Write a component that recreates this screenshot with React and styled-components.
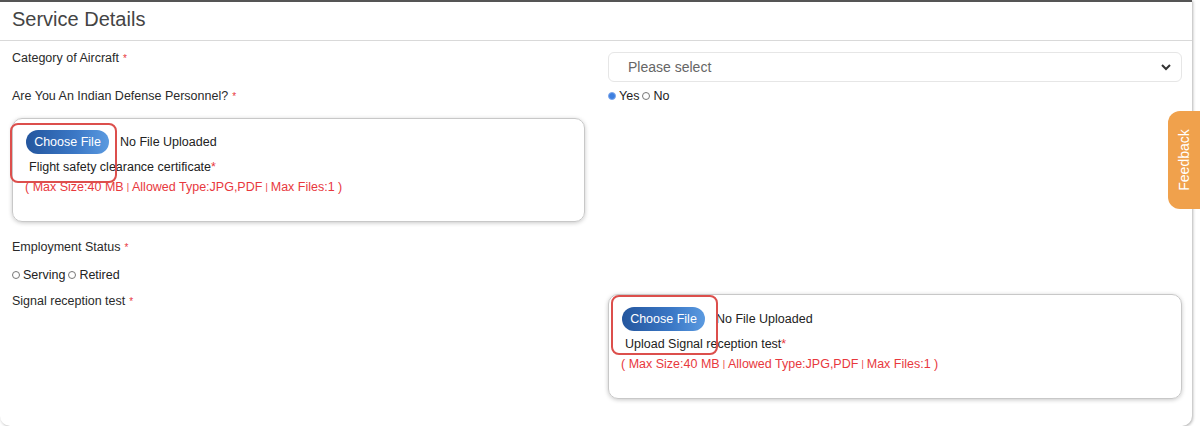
import styled, { createGlobalStyle } from "styled-components";

const red = "#e8383d";

const GlobalStyle = createGlobalStyle`
  body {
    margin: 0;
    background: #fff;
    font-family: "Liberation Sans", Arial, sans-serif;
    color: #333;
  }
`;

const Card = styled.div`
  width: 1192px;
  height: 426px;
  box-sizing: border-box;
  border-top: 2px solid #555;
  border-radius: 0 0 10px 10px;
  box-shadow: 1px 1px 3px rgba(0, 0, 0, 0.3);
  background: #fff;
`;
const Header = styled.div`
  height: 38px;
  display: flex;
  align-items: center;
  padding: 0 12px;
  border-bottom: 1px solid #d9d9d9;
`;
const Title = styled.h2`
  margin: 0;
  font-size: 20px;
  font-weight: normal;
  color: #444;
  margin-top: -3px;
`;
const Form = styled.div`
  padding: 11px 10px 0 12px;
`;
const Row = styled.div`
  display: grid;
  grid-template-columns: 573px 574px;
  column-gap: 23px;
  align-items: start;
  margin-bottom: ${(p) => p.$gap || 0}px;
`;
const Label = styled.div`
  font-size: 12.5px;
  line-height: 14px;
  color: #2a2a2a;
  margin-top: ${(p) => p.$top || 0}px;
`;
const Star = styled.span`
  color: ${red};
  margin-left: 4px;
  font-size: 10px;
`;
const Select = styled.div`
  height: 30px;
  box-sizing: border-box;
  border: 1px solid #e6e6e6;
  border-radius: 6px;
  display: flex;
  align-items: center;
  justify-content: space-between;
  padding: 0 9px 0 19px;
  font-size: 14px;
  color: #666;
`;
const Radios = styled.div`
  display: flex;
  align-items: center;
  font-size: 12.5px;
  line-height: 14px;
  color: #222;
`;
const Dot = styled.span`
  width: 8px;
  height: 8px;
  box-sizing: border-box;
  border-radius: 50%;
  border: 1px solid ${(p) => (p.$on ? "#7fa8ec" : "#777")};
  background: ${(p) => (p.$on ? "#3d7fe0" : "#fff")};
  margin: 0 3px 0 ${(p) => (p.$first ? 0 : 3)}px;
`;
const FileBox = styled.div`
  position: relative;
  height: ${(p) => p.$h}px;
  box-sizing: border-box;
  border: 1px solid #c8c8c8;
  border-radius: 10px;
  box-shadow: 0 1px 4px rgba(0, 0, 0, 0.22);
  padding: ${(p) => p.$pad}px 12px 0 12px;
`;
const Highlight = styled.div`
  position: absolute;
  left: ${(p) => p.$left}px;
  top: ${(p) => p.$top}px;
  width: 103px;
  height: 56px;
  border: 2px solid #dc4f4c;
  border-radius: 8px;
  pointer-events: none;
`;
const PickRow = styled.div`
  display: flex;
  align-items: center;
  gap: 11px;
  font-size: 12.5px;
  color: #222;
  padding-left: 1px;
`;
const ChooseButton = styled.button`
  width: 83px;
  height: 24px;
  border: none;
  border-radius: 12px;
  background: linear-gradient(90deg, #24569e 0%, #3b78c6 60%, #5b9ae0 100%);
  color: #fff;
  font-family: "Liberation Sans", Arial, sans-serif;
  font-size: 12.5px;
  padding: 0;
`;
const DocName = styled.div`
  font-size: 12.5px;
  color: #222;
  margin: 6px 0 0 ${(p) => p.$indent}px;
  line-height: 14px;
`;
const Rules = styled.div`
  font-size: 12.5px;
  color: ${red};
  margin-top: 6px;
  line-height: 14px;
`;
const Pipe = styled.span`
  font-size: 9px;
  margin: 0 3px;
  vertical-align: 1px;
`;
const Feedback = styled.div`
  position: fixed;
  right: 0;
  top: 111px;
  width: 32px;
  height: 98px;
  background: #f0a14c;
  border-radius: 12px 0 0 12px;
  display: flex;
  align-items: center;
  justify-content: center;
`;
const FeedbackText = styled.span`
  transform: rotate(-90deg);
  color: #fff;
  font-size: 14px;
  white-space: nowrap;
`;

const Upload = ({ name, h, pad, hl, indent }) => (
  <FileBox $h={h} $pad={pad}>
    <Highlight $left={hl[0]} $top={hl[1]} />
    <PickRow>
      <ChooseButton>Choose File</ChooseButton>
      No File Uploaded
    </PickRow>
    <DocName $indent={indent}>
      {name}
      <span style={{ color: red }}>*</span>
    </DocName>
    <Rules>
      ( Max Size:40 MB<Pipe>|</Pipe>Allowed Type:JPG,PDF<Pipe>|</Pipe>Max Files:1 )
    </Rules>
  </FileBox>
);

export default function App() {
  return (
    <>
      <GlobalStyle />
      <Card>
        <Header>
          <Title>Service Details</Title>
        </Header>
        <Form>
          <Row $gap={7}>
            <Label $top={-1}>
              Category of Aircraft<Star>*</Star>
            </Label>
            <Select>
              Please select
              <svg width="12" height="12" viewBox="0 0 12 12">
                <path d="M2 4l4 4 4-4" fill="none" stroke="#333" strokeWidth="2" />
              </svg>
            </Select>
          </Row>
          <Row $gap={14}>
            <Label>
              Are You An Indian Defense Personnel?<Star>*</Star>
            </Label>
            <Radios>
              <Dot $on $first />
              Yes
              <Dot />
              No
            </Radios>
          </Row>
          <Row $gap={18}>
            <Upload
              name="Flight safety clearance certificate"
              h={104}
              pad={11}
              hl={[-3, 4]}
              indent={4}
            />
          </Row>
          <Row $gap={13}>
            <Label>
              Employment Status<Star>*</Star>
            </Label>
          </Row>
          <Row $gap={12}>
            <Radios>
              <Dot $first />
              Serving
              <Dot />
              Retired
            </Radios>
          </Row>
          <Row>
            <Label>
              Signal reception test<Star>*</Star>
            </Label>
            <Upload
              name="Upload Signal reception test"
              h={105}
              pad={12}
              hl={[2, 0]}
              indent={4}
            />
          </Row>
        </Form>
      </Card>
      <Feedback>
        <FeedbackText>Feedback</FeedbackText>
      </Feedback>
    </>
  );
}
